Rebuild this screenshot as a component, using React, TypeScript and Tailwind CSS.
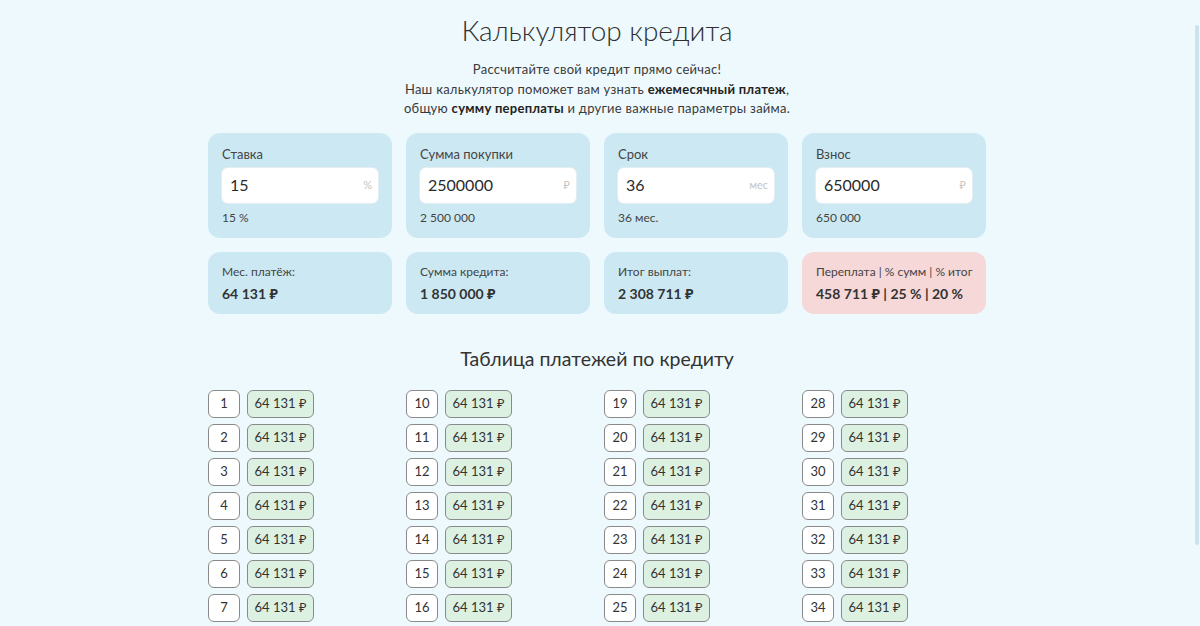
import type { ReactNode } from "react";

const font = { fontFamily: "Lato, 'Noto Sans', sans-serif" };

const inputs = [
  { label: "Ставка", value: "15", suffix: "%", hint: "15 %" },
  { label: "Сумма покупки", value: "2500000", suffix: "₽", hint: "2 500 000" },
  { label: "Срок", value: "36", suffix: "мес", hint: "36 мес." },
  { label: "Взнос", value: "650000", suffix: "₽", hint: "650 000" },
];

const results = [
  { label: "Мес. платёж:", value: "64 131 ₽", red: false },
  { label: "Сумма кредита:", value: "1 850 000 ₽", red: false },
  { label: "Итог выплат:", value: "2 308 711 ₽", red: false },
  { label: "Переплата | % сумм | % итог", value: "458 711 ₽ | 25 % | 20 %", red: true },
];

const columns = [0, 1, 2, 3].map((c) =>
  Array.from({ length: 9 }, (_, i) => c * 9 + i + 1),
);

function Card({ red, children }: { red?: boolean; children: ReactNode }) {
  return (
    <div
      className={
        red
          ? "rounded-[12px] bg-[#f6d8d8] px-[14px]"
          : "rounded-[12px] bg-[#cce9f3] px-[14px]"
      }
    >
      {children}
    </div>
  );
}

export default function App() {
  return (
    <div
      className="relative h-[626px] overflow-hidden bg-[#edf9fd] pr-[6px] text-[#333]"
      style={font}
    >
      <div className="mx-auto w-[778px] pt-[10px]">
        <h1 className="text-center text-[28px] font-light leading-[40px] text-[#2f2f2f]">
          Калькулятор кредита
        </h1>

        <div className="mt-[10px] text-center text-[13px] leading-[19.5px] tracking-[0.02em] text-[#3a3a3a]">
          <p>Рассчитайте свой кредит прямо сейчас!</p>
          <p>
            Наш калькулятор поможет вам узнать{" "}
            <b className="font-bold text-[#222]">ежемесячный платеж</b>,
          </p>
          <p>
            общую <b className="font-bold text-[#222]">сумму переплаты</b> и
            другие важные параметры займа.
          </p>
        </div>

        {/* Inputs */}
        <div className="mt-[14px] grid grid-cols-4 gap-[14px]">
          {inputs.map((f) => (
            <Card key={f.label}>
              <div className="pt-[13px] text-[13px] leading-[16px] text-[#444]">
                {f.label}
              </div>
              <div className="mt-[6px] flex h-[35px] items-center justify-between rounded-[6px] bg-white pl-[8px] pr-[6px] shadow-[0_0_0_1px_#e4eef2]">
                <span className="text-[16px] text-[#2a2a2a]">{f.value}</span>
                <span className="text-[11px] text-[#c4c4c4]">{f.suffix}</span>
              </div>
              <div className="mt-[7px] pb-[12px] text-[12px] leading-[16px] text-[#444]">
                {f.hint}
              </div>
            </Card>
          ))}
        </div>

        {/* Results */}
        <div className="mt-[14px] grid grid-cols-4 gap-[14px]">
          {results.map((r) => (
            <Card key={r.label} red={r.red}>
              <div className="whitespace-nowrap pt-[12px] text-[12px] leading-[16px] text-[#444]">
                {r.label}
              </div>
              <div className="mt-[5px] whitespace-nowrap pb-[11px] text-[14px] font-bold leading-[18px] text-[#333]">
                {r.value}
              </div>
            </Card>
          ))}
        </div>

        <h2 className="mt-[31px] text-center text-[19.5px] leading-[28px] text-[#333]">
          Таблица платежей по кредиту
        </h2>

        {/* Payment table */}
        <div className="mt-[17px] grid grid-cols-4 gap-[14px]">
          {columns.map((col, ci) => (
            <div key={ci} className="flex flex-col gap-[6px]">
              {col.map((n) => (
                <div key={n} className="flex gap-[7px]">
                  <div className="flex h-[28px] w-[32px] items-center justify-center rounded-[6px] border border-[#8a8a8a] bg-white text-[13px] text-[#333]">
                    {n}
                  </div>
                  <div className="flex h-[28px] w-[67px] items-center justify-center whitespace-nowrap rounded-[6px] border border-[#8a8a8a] bg-[#dcf1e2] text-[13px] text-[#333]">
                    64 131 ₽
                  </div>
                </div>
              ))}
            </div>
          ))}
        </div>
      </div>

      {/* scrollbar thumb */}
      <div className="absolute right-[1px] top-[25px] h-[520px] w-[4px] rounded-full bg-[#cbe4ec]" />
    </div>
  );
}
